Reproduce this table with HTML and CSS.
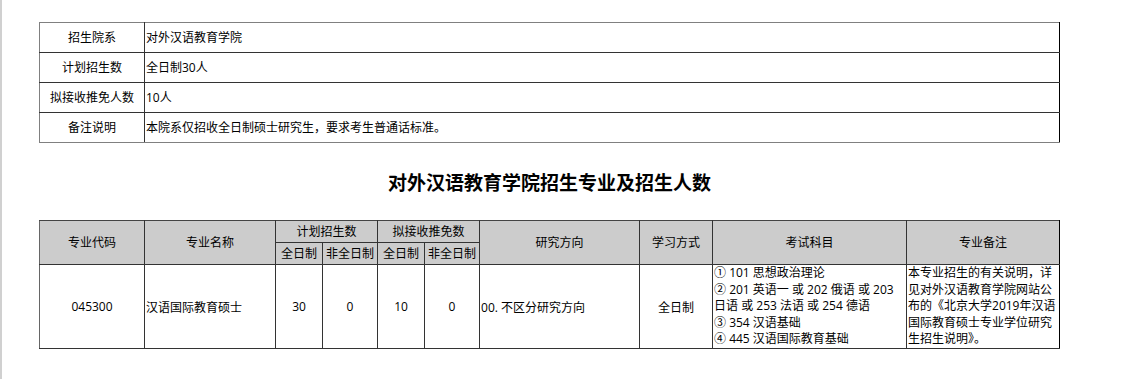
FILE: index.html
```html
<!DOCTYPE html>
<html lang="zh-CN">
<head>
<meta charset="utf-8">
<link rel="stylesheet" href="styles.css">
</head>
<body>
<div class="page">
  <div class="content">
    <table class="info">
      <colgroup><col class="c-label"><col></colgroup>
      <tr><td class="label">招生院系</td><td class="val">对外汉语教育学院</td></tr>
      <tr><td class="label">计划招生数</td><td class="val">全日制30人</td></tr>
      <tr><td class="label">拟接收推免人数</td><td class="val">10人</td></tr>
      <tr><td class="label">备注说明</td><td class="val">本院系仅招收全日制硕士研究生，要求考生普通话标准。</td></tr>
    </table>

    <h2 class="title">对外汉语教育学院招生专业及招生人数</h2>

    <table class="majors">
      <colgroup>
        <col class="w105"><col class="w131"><col class="w47"><col class="w55"><col class="w47"><col class="w55"><col class="w160"><col class="w73"><col class="w194"><col class="w153">
      </colgroup>
      <thead>
        <tr class="h1">
          <th rowspan="2">专业代码</th>
          <th rowspan="2">专业名称</th>
          <th colspan="2">计划招生数</th>
          <th colspan="2">拟接收推免数</th>
          <th rowspan="2">研究方向</th>
          <th rowspan="2">学习方式</th>
          <th rowspan="2">考试科目</th>
          <th rowspan="2">专业备注</th>
        </tr>
        <tr class="h2">
          <th>全日制</th><th>非全日制</th><th>全日制</th><th>非全日制</th>
        </tr>
      </thead>
      <tbody>
        <tr class="body-row">
          <td class="center">045300</td>
          <td class="left">汉语国际教育硕士</td>
          <td class="center">30</td>
          <td class="center">0</td>
          <td class="center">10</td>
          <td class="center">0</td>
          <td class="left">00. 不区分研究方向</td>
          <td class="center">全日制</td>
          <td class="left multi">① 101 思想政治理论<br>② 201 英语一 或 202 俄语 或 203 日语 或 253 法语 或 254 德语<br>③ 354 汉语基础<br>④ 445 汉语国际教育基础</td>
          <td class="left multi">本专业招生的有关说明，详见对外汉语教育学院网站公布的《北京大学2019年汉语国际教育硕士专业学位研究生招生说明》。</td>
        </tr>
      </tbody>
    </table>
  </div>
</div>
</body>
</html>
```

FILE: styles.css
```css
html, body {
  margin: 0;
  padding: 0;
  background: #fff;
}

.page {
  min-height: 379px;
  box-sizing: border-box;
  border-left: 2px solid #d0d0d0;
  padding: 22px 0 0 37px;
  font-family: "Open Sans", "Noto Sans CJK SC", sans-serif;
  font-size: 12px;
  color: #000;
}

.content {
  width: 1021px;
}

table {
  border-collapse: collapse;
  table-layout: fixed;
  width: 1021px;
}

td, th {
  border: 1px solid #333;
  padding: 0 1px;
  font-weight: normal;
}

.info tr:first-child td {
  border-top: 1px solid #808080;
}

.info tr:last-child td {
  border-bottom: 1px solid #808080;
}

.info td:first-child {
  border-left: 1px solid #808080;
}

.info td:last-child {
  border-right: 1px solid #000;
}

.c-label { width: 105px; }

.info td {
  height: 29px;
  line-height: 16px;
}

.label {
  text-align: center;
}

.val {
  text-align: left;
}

.title {
  margin: 28px 0 25px;
  font-size: 19px;
  line-height: 24px;
  font-weight: bold;
  text-align: center;
  color: #000;
}

.w105 { width: 105px; }
.w131 { width: 131px; }
.w47 { width: 47px; }
.w55 { width: 55px; }
.w160 { width: 160px; }
.w73 { width: 73px; }
.w194 { width: 194px; }
.w153 { width: 153px; }

.majors th {
  background: #cccccc;
  text-align: center;
  line-height: 16px;
}

.majors thead tr:first-child th {
  border-top: 1px solid #444;
}

.majors th:first-child,
.majors td:first-child {
  border-left: 1px solid #666;
}

.majors th:last-child,
.majors td:last-child {
  border-right: 1px solid #000;
}

.h1 th { height: 21px; }
.h2 th { height: 21px; }

.body-row td {
  height: 83px;
  vertical-align: middle;
}

.center { text-align: center; }
.left { text-align: left; }

.multi {
  line-height: 16.6px;
}
```
